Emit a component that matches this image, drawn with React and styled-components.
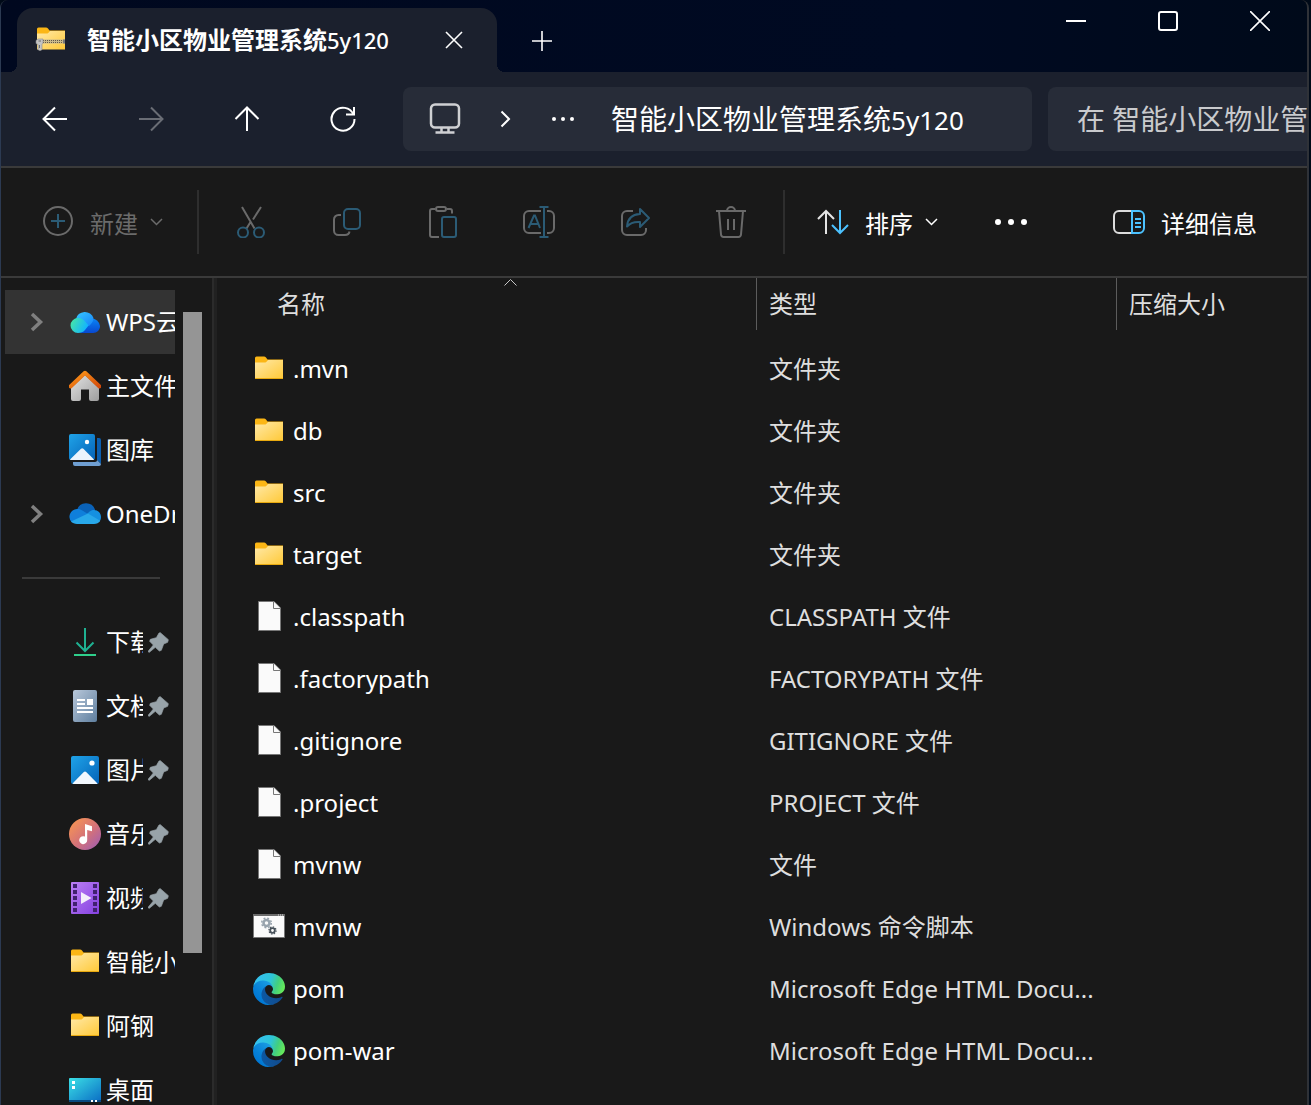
import React from "react"
import styled, { createGlobalStyle } from "styled-components"

const GlobalStyle = createGlobalStyle`
  * {
    box-sizing: border-box;
  }
  body {
    margin: 0;
    background: #000a18;
    color: #fff;
    font-family: "Noto Sans", "Noto Sans CJK SC", sans-serif;
    font-size: 24px;
    line-height: 32px;
  }
  button, input {
    font: inherit;
    color: inherit;
    border: 0;
    padding: 0;
    background: none;
  }
  svg {
    display: block;
    flex: none;
  }
`

const Window = styled.div`
  display: flex;
  flex-direction: column;
  height: 100vh;
  margin-right: 2px;
  overflow: hidden;
  background: #191919;
  border-left: 1px solid #2c3a52;
  border-right: 2px solid #2f3238;
  border-radius: 8px 8px 0 0;
`

/* title bar */

const TitleBar = styled.header`
  display: flex;
  flex: none;
  align-items: flex-end;
  height: 72px;
  padding-left: 16px;
  background: linear-gradient(90deg, #00081f, #000a22 70%, #000a1a);
`

const Tab = styled.div`
  position: relative;
  display: flex;
  align-items: center;
  width: 480px;
  height: 64px;
  padding: 0 20px 0 18px;
  background: #1b202d;
  border-radius: 16px 16px 0 0;

  &::before,
  &::after {
    content: "";
    position: absolute;
    bottom: 0;
    width: 8px;
    height: 8px;
  }
  &::before {
    right: 100%;
    background: radial-gradient(circle at 0 0, transparent 8px, #1b202d 8px);
  }
  &::after {
    left: 100%;
    background: radial-gradient(circle at 100% 0, transparent 8px, #1b202d 8px);
  }
`

const TabTitle = styled.span`
  flex: 1;
  margin-left: 20px;
  font-weight: 700;
  white-space: nowrap;
`

const TabSuffix = styled.span`
  font-size: 22px;
  font-weight: 500;
`

const SquareButton = styled.button`
  display: flex;
  align-items: center;
  justify-content: center;
  width: 46px;
  height: 46px;
`

const NewTabButton = styled(SquareButton)`
  align-self: center;
  margin: 10px 0 0 22px;
`

const WindowButtons = styled.div`
  display: flex;
  align-self: flex-start;
  margin: 0 1px 0 auto;
`

const WindowButton = styled(SquareButton)`
  width: 92px;
  height: 42px;
`

/* address row */

const AddressRow = styled.nav`
  display: flex;
  flex: none;
  align-items: center;
  height: 94px;
  padding-left: 6px;
  background: #1b202d;
`

const NavButton = styled.button`
  display: flex;
  align-items: center;
  justify-content: center;
  width: 96px;
  height: 64px;
  color: ${({ disabled }) => (disabled ? "#6a6d75" : "#fff")};
`

const AddressBox = styled.div`
  display: flex;
  flex: 1;
  align-items: center;
  min-width: 0;
  height: 64px;
  margin: 0 16px 0 12px;
  padding-left: 26px;
  background: #272c38;
  border-radius: 8px;
  overflow: hidden;
`

const Crumb = styled.button`
  display: flex;
  align-items: center;
  margin-right: ${({ $gap }) => $gap || 0}px;
  font-size: 28px;
  line-height: 40px;
  white-space: nowrap;
`

const CrumbSuffix = styled.span`
  font-size: 26px;
`

const SearchInput = styled.input`
  width: 259px;
  height: 64px;
  padding-left: 29px;
  background: #272c38;
  border-radius: 8px 0 0 8px;
  font-size: 28px;

  &::placeholder {
    color: #c9cacd;
    opacity: 1;
  }
`

/* command bar */

const CommandBar = styled.div`
  display: flex;
  flex: none;
  align-items: center;
  height: 112px;
  border-top: 2px solid #3a3a3a;
  border-bottom: 2px solid #3a3a3a;
`

const CommandButton = styled.button`
  display: flex;
  align-items: center;
  height: 64px;
  color: ${({ disabled }) => (disabled ? "#6b6b6b" : "#fff")};
`

const CommandLabel = styled.span`
  margin: 4px 12px 0 16px;
  white-space: nowrap;
`

const NewButton = styled(CommandButton)`
  margin: 0 34px 0 41px;
`

const IconButton = styled(CommandButton)`
  justify-content: center;
  width: 96px;
`

const SortButton = styled(CommandButton)`
  margin: 0 57px 0 32px;
`

const DetailsButton = styled(CommandButton)`
  margin: 0 38px 0 auto;
`

const Separator = styled.div`
  width: 2px;
  height: 64px;
  margin: ${({ $before }) => ($before ? "0 0 0 4px" : "0 4px 0 0")};
  background: #2e2e2e;
`

/* body */

const Body = styled.div`
  display: flex;
  flex: 1;
  min-height: 0;
`

const Sidebar = styled.aside`
  display: flex;
  flex: none;
  width: 216px;
  border-right: 3px solid #212121;
  overflow: hidden;
`

const Tree = styled.nav`
  width: 170px;
  margin-left: 4px;
  padding-top: 12px;
`

const TreeItem = styled.a`
  display: flex;
  align-items: center;
  height: 64px;
  overflow: hidden;
  color: #fff;
  text-decoration: none;
  background: ${({ $selected }) => ($selected ? "#333" : "transparent")};
`

const Expander = styled.span`
  display: flex;
  flex: none;
  align-items: center;
  width: 64px;
  padding-left: 25px;
`

const TreeLabel = styled.span`
  flex: 1;
  min-width: 0;
  margin-left: 5px;
  overflow: hidden;
  white-space: nowrap;
`

const PinSlot = styled.span`
  flex: none;
  padding: 0 6px 0 5px;
`

const TreeDivider = styled.hr`
  width: 138px;
  height: 2px;
  margin: 31px 0 31px 17px;
  border: 0;
  background: #3a3a3a;
`

const ScrollTrack = styled.div`
  flex: 1;
  padding: 34px 10px 0 8px;
  border-right: 2px solid #2b2b2b;
`

const ScrollThumb = styled.div`
  height: 641px;
  background: #959595;
`

const FilePane = styled.main`
  flex: 1;
  min-width: 0;
  overflow: hidden;
`

const FileTable = styled.table`
  width: 100%;
  table-layout: fixed;
  border-collapse: collapse;
`

const HeaderCell = styled.th`
  position: relative;
  width: ${({ $width }) => $width || "auto"};
  padding: 0 0 8px;
  font-weight: 400;
  text-align: left;
  vertical-align: top;
`

const HeaderButton = styled.button`
  display: flex;
  align-items: center;
  width: 100%;
  height: 52px;
  padding-left: ${({ $first }) => ($first ? 60 : 12)}px;
  border-left: ${({ $first }) => ($first ? "0" : "1px solid #5c5c5c")};
  color: #dedede;
`

const SortMark = styled.span`
  position: absolute;
  top: 1px;
  left: 287px;
`

const Cell = styled.td`
  height: 62px;
  padding: 0 0 0 13px;
  color: #dedede;
  white-space: nowrap;
`

const FileName = styled.div`
  display: flex;
  align-items: center;
  gap: 8px;
  padding-left: 23px;
  color: #fff;
`

/* icons */

const Icon = ({ size = 32, children, ...rest }) => (
  <svg width={size} height={size} viewBox={`0 0 ${size} ${size}`} fill="none" aria-hidden="true" {...rest}>
    {children}
  </svg>
)

const FolderIcon = () => (
  <Icon>
    <defs>
      <linearGradient id="folder" x1="0" y1="0" x2="1" y2="1">
        <stop offset="0" stopColor="#ffe9a8" />
        <stop offset="1" stopColor="#ffc938" />
      </linearGradient>
    </defs>
    <path d="M2 5a1.500 1.500 0 0 1 1.500-1.500H11a3 3 0 0 1 2 1l1.500 2H30V14H2Z" fill="#fbb615" />
    <path d="M2 9.500h9.500c1.200 0 1.800-.4 2.500-1.200.5-.8 1-1.300 2-1.300h14v18.500H2Z" fill="url(#folder)" />
    <path d="M2 25.500h28" stroke="#e8a90f" />
  </Icon>
)

const ZipFolderIcon = () => (
  <Icon>
    <path d="M2 5a1.500 1.500 0 0 1 1.500-1.500H11a3 3 0 0 1 2 1l1.500 2H30V14H2Z" fill="#fbb615" />
    <path d="M2 9.500h9.500c1.200 0 1.800-.4 2.500-1.200.5-.8 1-1.300 2-1.300h14v18.500H2Z" fill="url(#folder)" />
    <path d="M8 15.500h22v4H8z" fill="#c9b98a" />
    <path d="M8 16.500h21.500M8 18.500h21.500" stroke="#64594a" strokeDasharray="1 1" />
    <path d="M28 15.500h2v4h-2z" fill="#777" />
    <path d="M1 16.500l2-1.500h5v4l-1 1.500v5l-1 1H4l-1-1v-5l-2-1Z" fill="#c4c4c4" stroke="#8a8a8a" strokeWidth=".6" />
    <path d="M3.500 17h2.500M4.500 21v3" stroke="#6d6d6d" />
  </Icon>
)

const PageIcon = () => (
  <Icon>
    <path d="M5.500.5h15.500l6.500 6.500v22.500h-22Z" fill="#fafafa" stroke="#777" />
    <path d="M20.500.5v7h7" fill="#fafafa" stroke="#777" />
  </Icon>
)

const ScriptIcon = () => (
  <Icon>
    <path d="M.5 3.500h31v23H.5z" fill="#fafafa" stroke="#777" />
    <path d="M0 4h32" stroke="#6b6b6b" strokeWidth="2" />
    <path d="M25 4h5" stroke="#ddd" strokeDasharray="1 1" />
    <circle cx="13.500" cy="12" r="3" stroke="#98a3ad" strokeWidth="2.500" />
    <circle cx="13.500" cy="12" r="4.800" stroke="#98a3ad" strokeWidth="1.500" strokeDasharray="1.900 1.900" />
    <circle cx="19.500" cy="19.500" r="2.300" stroke="#48525b" strokeWidth="1.800" />
    <circle cx="19.500" cy="19.500" r="3.600" stroke="#48525b" strokeWidth="1.200" strokeDasharray="1.400 1.400" />
  </Icon>
)

const EdgeIcon = () => (
  <svg width="32" height="32" viewBox="0 0 256 256" aria-hidden="true">
    <defs>
      <linearGradient id="edgeDark" x1="63" y1="177" x2="242" y2="177" gradientUnits="userSpaceOnUse">
        <stop offset="0" stopColor="#0c59a4" />
        <stop offset="1" stopColor="#114a8b" />
      </linearGradient>
      <linearGradient id="edgeBlue" x1="157" y1="100" x2="46" y2="221" gradientUnits="userSpaceOnUse">
        <stop offset="0" stopColor="#1b9de2" />
        <stop offset=".16" stopColor="#1595df" />
        <stop offset=".67" stopColor="#0680d7" />
        <stop offset="1" stopColor="#0078d4" />
      </linearGradient>
      <linearGradient id="edgeGreen" x1="20" y1="60" x2="245" y2="140" gradientUnits="userSpaceOnUse">
        <stop offset="0" stopColor="#35c1f1" />
        <stop offset=".5" stopColor="#2ec5d8" />
        <stop offset=".75" stopColor="#42cf7f" />
        <stop offset="1" stopColor="#66e85a" />
      </linearGradient>
    </defs>
    <g transform="translate(-4.630 -4.920)">
      <path
        fill="url(#edgeDark)"
        d="M235.680 195.460a93.730 93.730 0 0 1-10.540 4.710 101.870 101.870 0 0 1-35.900 6.460c-47.320 0-88.540-32.550-88.540-74.320A31.480 31.480 0 0 1 117.130 105c-42.800 1.800-53.800 46.400-53.800 72.530 0 73.880 68.090 81.370 82.760 81.370 7.910 0 19.840-2.300 27-4.560l1.310-.44a128.340 128.340 0 0 0 66.600-52.800 4 4 0 0 0-5.320-5.640z"
      />
      <path
        fill="url(#edgeBlue)"
        d="M110.340 246.340A79.200 79.200 0 0 1 87.600 225a80.720 80.720 0 0 1 29.530-120c3.120-1.470 8.450-4.130 15.540-4a32.350 32.350 0 0 1 25.690 13 31.880 31.880 0 0 1 6.360 18.660c0-.21 24.460-79.600-80-79.600-43.900 0-80 41.660-80 78.210a130.150 130.150 0 0 0 12.110 56 128 128 0 0 0 156.380 67.110 75.550 75.550 0 0 1-62.780-8z"
      />
      <path
        fill="url(#edgeGreen)"
        d="M156.940 153.780c-.81 1.050-3.300 2.500-3.300 5.660 0 2.610 1.700 5.120 4.720 7.230 14.380 10 41.490 8.680 41.560 8.680a59.560 59.560 0 0 0 30.270-8.350 61.380 61.380 0 0 0 30.430-52.880c.26-22.410-8-37.310-11.340-43.910-21.190-41.450-66.930-65.290-116.670-65.290a128 128 0 0 0-128 126.200c.48-36.540 36.800-66.050 80-66.050 3.500 0 23.460.34 42 10.070 16.340 8.580 24.900 18.940 30.850 29.210 6.180 10.670 7.280 24.150 7.280 29.520s-2.740 13.330-7.800 19.910z"
      />
    </g>
  </svg>
)

const CloudDriveIcon = () => (
  <Icon>
    <defs>
      <linearGradient id="wpsLeft" x1="0" y1="0" x2="1" y2="0.400">
        <stop offset="0" stopColor="#4aeb9e" />
        <stop offset="1" stopColor="#12b4ff" />
      </linearGradient>
      <linearGradient id="wpsTop" x1="0" y1="0" x2="1" y2="1">
        <stop offset="0" stopColor="#38c8ff" />
        <stop offset="1" stopColor="#1583fa" />
      </linearGradient>
      <linearGradient id="wpsRight" x1="0" y1="0" x2="0" y2="1">
        <stop offset="0" stopColor="#0a84f5" />
        <stop offset="1" stopColor="#0848d0" />
      </linearGradient>
    </defs>
    <path d="M11 27l11-14.500a8.500 8.500 0 0 1 9 7.500c0 4-3 7-7 7Z" fill="url(#wpsRight)" />
    <path d="M7 13a9 8.500 0 0 1 17.500-1c.2 3-1.500 5-4.500 8Z" fill="url(#wpsTop)" />
    <path d="M9 12c4.500 0 6 2 10.500 7.500L16 24c-2 2.200-4 3-7 3A7.500 7.500 0 0 1 9 12Z" fill="url(#wpsLeft)" />
  </Icon>
)

const HomeIcon = () => (
  <Icon>
    <defs>
      <linearGradient id="homeWall" x1="0" y1="0" x2="1" y2="1">
        <stop offset="0" stopColor="#e3e3e3" />
        <stop offset="1" stopColor="#9d9d9d" />
      </linearGradient>
      <linearGradient id="homeRoof" x1="0" y1="0" x2="1" y2="1">
        <stop offset="0" stopColor="#ff9c1a" />
        <stop offset="1" stopColor="#d34a0b" />
      </linearGradient>
    </defs>
    <path d="M16 5L30 18v11a2 2 0 0 1-2 2h-6a2 2 0 0 1-2-2v-9.500h-8V29a2 2 0 0 1-2 2H4a2 2 0 0 1-2-2V18Z" fill="url(#homeWall)" />
    <path d="M1.500 16.500L16 2.800l14.500 13.700" stroke="url(#homeRoof)" strokeWidth="4" strokeLinejoin="round" strokeLinecap="round" />
  </Icon>
)

const PictureDefs = () => (
  <defs>
    <linearGradient id="photo" x1="0" y1="0" x2="1" y2="1">
      <stop offset="0" stopColor="#1fa3e8" />
      <stop offset="1" stopColor="#0563b8" />
    </linearGradient>
  </defs>
)

const GalleryIcon = () => (
  <Icon>
    <PictureDefs />
    <path d="M28 4h2a2 2 0 0 1 2 2v24l-4-4Z" fill="#0b5fb0" />
    <path d="M4 28h22c1.500 0 2-1 2-2l4 4a2 2 0 0 1-2 2H6a2 2 0 0 1-2-2Z" fill="#6f9fd2" />
    <rect width="26" height="26" rx="2" fill="url(#photo)" />
    <path d="M1 25.500L12 14.800a1.700 1.700 0 0 1 2.400 0L25 25.500q-.5.500-1 .5H2q-.5 0-1-.5Z" fill="#eaf4fd" />
    <circle cx="18" cy="8" r="2.200" fill="#fff" />
  </Icon>
)

const PicturesIcon = () => (
  <Icon>
    <PictureDefs />
    <rect x="2" y="2" width="28" height="28" rx="2" fill="url(#photo)" />
    <path d="M3.500 29.500L14.800 18a1.700 1.700 0 0 1 2.400 0l11.300 11.500q-.5.500-1 .5h-23Z" fill="#f2f8fe" />
    <circle cx="23" cy="9" r="2.600" fill="#fff" />
  </Icon>
)

const OneDriveIcon = () => (
  <Icon>
    <path d="M8 12a9.500 9.500 0 0 1 18-.5L24 18l-12 1Z" fill="#0a62b8" />
    <path d="M8 11c4 0 6 2 12 5.500L3 24.500A7.800 7.800 0 0 1 8 11Z" fill="#0f7fdb" />
    <path d="M25 12c4 0 7 3 7 7 0 2-.6 3.500-1.800 5L17 17c3-2.500 4-5 8-5Z" fill="#1590e0" />
    <path d="M2 23.500L19 15.500l12.200 7.200c-1.500 2.300-3.400 3.300-6.200 3.300H8c-2.500 0-4.500-1-6-2.500Z" fill="#28a8ea" />
  </Icon>
)

const DownloadIcon = () => (
  <Icon strokeWidth="2">
    <path d="M16 2v23M7.500 16.500l8.500 8.500 8.500-8.500" stroke="#1fb192" />
    <path d="M5 29h22" stroke="#2fcf8c" />
  </Icon>
)

const DocumentIcon = () => (
  <Icon>
    <defs>
      <linearGradient id="doc" x1="0" y1="0" x2="1" y2="1">
        <stop offset="0" stopColor="#b9c8da" />
        <stop offset="1" stopColor="#5f7f9f" />
      </linearGradient>
    </defs>
    <rect x="4" width="24" height="32" rx="2" fill="url(#doc)" />
    <path d="M8 10h8M8 14h8M8 18h16M8 22h16" stroke="#fff" strokeWidth="2" />
    <path d="M18 9h6v6h-6z" fill="#fff" />
  </Icon>
)

const MusicIcon = () => (
  <Icon>
    <defs>
      <linearGradient id="music" x1="0" y1="0" x2="1" y2="1">
        <stop offset=".1" stopColor="#f59355" />
        <stop offset=".55" stopColor="#d3717a" />
        <stop offset="1" stopColor="#9a5bb8" />
      </linearGradient>
    </defs>
    <circle cx="16" cy="16" r="16" fill="url(#music)" />
    <path d="M16 6l7 2.200v5L18.200 12v10a4 4 0 1 1-2.200-3.400Z" fill="#fff" />
  </Icon>
)

const VideoIcon = () => (
  <Icon>
    <defs>
      <linearGradient id="video" x1="0" y1="0" x2="1" y2="1">
        <stop offset="0" stopColor="#bb7ff5" />
        <stop offset="1" stopColor="#8541e0" />
      </linearGradient>
    </defs>
    <rect x="2" width="28" height="32" rx="1" fill="url(#video)" />
    <path d="M6 2v28M26 2v28" stroke="#40216f" strokeWidth="4" strokeDasharray="4 2" />
    <path d="M12 10l10.500 6L12 22Z" fill="#f4eefb" />
  </Icon>
)

const DesktopIcon = () => (
  <Icon>
    <defs>
      <linearGradient id="desk" x1="0" y1="0" x2="1" y2="1">
        <stop offset="0" stopColor="#3be0e6" />
        <stop offset="1" stopColor="#0a6cc4" />
      </linearGradient>
    </defs>
    <rect y="4" width="32" height="24" rx="1" fill="url(#desk)" />
    <path d="M0 26h32v2H0z" fill="#0a4a80" />
    <path d="M3 7h3v3H3zM3 12h3v3H3zM22 26h2v2h-2zM26 26h2v2h-2z" fill="#fff" />
  </Icon>
)

const PinIcon = () => (
  <svg width="21" height="21" viewBox="0 0 63 63" aria-hidden="true">
    <path
      d="M37 2L61 23L59 31L47 36L40 55L34 57L22 46L4 61L1 60L1 57L16 39L5 28L7 22L25 17L33 3Z"
      fill="#98a3a9"
      stroke="#98a3a9"
      strokeWidth="2"
      strokeLinejoin="round"
    />
  </svg>
)

const ExpandIcon = () => (
  <svg width="14" height="20" viewBox="0 0 14 20" fill="none" aria-hidden="true">
    <path d="M2 2l8.500 8L2 18" stroke="#808080" strokeWidth="3.500" />
  </svg>
)

const CaretIcon = () => (
  <svg width="13" height="8" viewBox="0 0 13 8" fill="none" stroke="currentColor" strokeWidth="1.500" aria-hidden="true">
    <path d="M1 1l5.500 5.500L12 1" />
  </svg>
)

const gray = "#6a6a6a"
const teal = "#2b5b75"

const CutIcon = () => (
  <Icon strokeWidth="2">
    <path d="M7 1l12.500 21.500M26 1l-8 12.500M15.500 16l-4 6.500" stroke={gray} />
    <circle cx="8" cy="26.500" r="5" stroke={teal} />
    <circle cx="24" cy="26.500" r="5" stroke={teal} />
  </Icon>
)

const CopyIcon = () => (
  <Icon strokeWidth="2">
    <path d="M10 9H7.500A4.500 4.500 0 0 0 3 13.500v11A4.500 4.500 0 0 0 7.500 29h6.500c2.500 0 4-1 4.500-3.500" stroke={gray} />
    <rect x="13" y="3" width="16" height="20" rx="4" stroke={teal} />
  </Icon>
)

const PasteIcon = () => (
  <Icon strokeWidth="2">
    <path d="M8 3H5A2 2 0 0 0 3 5v24a2 2 0 0 0 2 2h7M20 3h3a2 2 0 0 1 2 2v2.500" stroke={gray} />
    <rect x="9" y="1" width="10" height="4" rx="2" stroke={gray} />
    <rect x="15" y="11" width="14" height="20" rx="2" stroke={teal} />
  </Icon>
)

const RenameIcon = () => (
  <Icon strokeWidth="2">
    <path d="M18 5H6a5 5 0 0 0-5 5v12a5 5 0 0 0 5 5h12M24 5h2a5 5 0 0 1 5 5v12a5 5 0 0 1-5 5h-2" stroke={gray} />
    <path d="M5.500 22L11 9.500h1L17 22M7.500 18h8M16.500 1h9M16.500 31h9M21 1v30" stroke={teal} />
  </Icon>
)

const ShareIcon = () => (
  <Icon strokeWidth="2">
    <path d="M14 5H8a5 5 0 0 0-5 5v14a5 5 0 0 0 5 5h14a5 5 0 0 0 5-5v-2" stroke={gray} />
    <path d="M21 3l9 9-9 9v-5c-6-.5-9.500.5-13 4.500.5-7 4-12 13-12.500Z" stroke={teal} strokeLinejoin="round" />
  </Icon>
)

const DeleteIcon = () => (
  <Icon strokeWidth="2">
    <path d="M1 5h30M12 5a4 4 0 0 1 8 0M4 5l2 23.500A2.500 2.500 0 0 0 8.500 31h15a2.500 2.500 0 0 0 2.500-2.500L28 5M13 13v11M19 13v11" stroke={gray} />
  </Icon>
)

const NewIcon = () => (
  <Icon strokeWidth="2">
    <circle cx="16" cy="15" r="14" stroke={gray} />
    <path d="M16 8v14M9 15h14" stroke={teal} />
  </Icon>
)

const SortIcon = () => (
  <Icon strokeWidth="2">
    <path d="M9 28V5M1 13l8-8 8 8" stroke="#e4e4e4" />
    <path d="M23 4v23M15 19l8 8 8-8" stroke="#4cc2ff" />
  </Icon>
)

const DetailsIcon = () => (
  <Icon strokeWidth="2">
    <path d="M19 5H6a5 5 0 0 0-5 5v12a5 5 0 0 0 5 5h13" stroke="#dcdcdc" />
    <path d="M19 5h7a5 5 0 0 1 5 5v12a5 5 0 0 1-5 5h-7ZM22 13h6M22 17h6M22 21h6" stroke="#4cc2ff" />
  </Icon>
)

const MoreIcon = ({ width = 32, r = 3 }) => (
  <svg width={width} height="8" viewBox={`0 0 ${width} 8`} fill="#fff" aria-hidden="true">
    <circle cx={r} cy="4" r={r} />
    <circle cx={width / 2} cy="4" r={r} />
    <circle cx={width - r} cy="4" r={r} />
  </svg>
)

const MonitorIcon = () => (
  <Icon stroke="#cfd0d3" strokeWidth="2.500">
    <rect x="2" y="1.500" width="28" height="23" rx="4" />
    <path d="M12.500 25v4M19.500 25v4M6.500 29.500h19" />
  </Icon>
)

const places = [
  { label: "WPS云盘", icon: <CloudDriveIcon />, expandable: true, selected: true },
  { label: "主文件夹", icon: <HomeIcon /> },
  { label: "图库", icon: <GalleryIcon /> },
  { label: "OneDrive", icon: <OneDriveIcon />, expandable: true },
]

const pinned = [
  { label: "下载", icon: <DownloadIcon />, pin: true },
  { label: "文档", icon: <DocumentIcon />, pin: true },
  { label: "图片", icon: <PicturesIcon />, pin: true },
  { label: "音乐", icon: <MusicIcon />, pin: true },
  { label: "视频", icon: <VideoIcon />, pin: true },
  { label: "智能小区", icon: <FolderIcon /> },
  { label: "阿钢", icon: <FolderIcon /> },
  { label: "桌面", icon: <DesktopIcon /> },
]

const files = [
  { name: ".mvn", type: "文件夹", icon: <FolderIcon /> },
  { name: "db", type: "文件夹", icon: <FolderIcon /> },
  { name: "src", type: "文件夹", icon: <FolderIcon /> },
  { name: "target", type: "文件夹", icon: <FolderIcon /> },
  { name: ".classpath", type: "CLASSPATH 文件", icon: <PageIcon /> },
  { name: ".factorypath", type: "FACTORYPATH 文件", icon: <PageIcon /> },
  { name: ".gitignore", type: "GITIGNORE 文件", icon: <PageIcon /> },
  { name: ".project", type: "PROJECT 文件", icon: <PageIcon /> },
  { name: "mvnw", type: "文件", icon: <PageIcon /> },
  { name: "mvnw", type: "Windows 命令脚本", icon: <ScriptIcon /> },
  { name: "pom", type: "Microsoft Edge HTML Docu...", icon: <EdgeIcon /> },
  { name: "pom-war", type: "Microsoft Edge HTML Docu...", icon: <EdgeIcon /> },
]

const Place = ({ label, icon, expandable, selected, pin }) => (
  <TreeItem href="#" $selected={selected}>
    <Expander>{expandable && <ExpandIcon />}</Expander>
    {icon}
    <TreeLabel>{label}</TreeLabel>
    {pin && (
      <PinSlot>
        <PinIcon />
      </PinSlot>
    )}
  </TreeItem>
)

export default () => {
  return (
    <>
      <GlobalStyle />
      <Window>
        <TitleBar>
          <Tab>
            <ZipFolderIcon />
            <TabTitle>
              智能小区物业管理系统<TabSuffix>5y120</TabSuffix>
            </TabTitle>
            <SquareButton aria-label="关闭标签页">
              <Icon size={18} stroke="#fff" strokeWidth="1.600">
                <path d="M1 1l16 16M17 1L1 17" />
              </Icon>
            </SquareButton>
          </Tab>
          <NewTabButton aria-label="新标签页">
            <Icon size={20} stroke="#fff" strokeWidth="1.600">
              <path d="M10 0v20M0 10h20" />
            </Icon>
          </NewTabButton>
          <WindowButtons>
            <WindowButton aria-label="最小化">
              <Icon size={20} stroke="#fff" strokeWidth="2">
                <path d="M0 10h20" />
              </Icon>
            </WindowButton>
            <WindowButton aria-label="最大化">
              <Icon size={20} stroke="#fff" strokeWidth="2">
                <rect x="1" y="1" width="18" height="18" rx="2" />
              </Icon>
            </WindowButton>
            <WindowButton aria-label="关闭">
              <Icon size={20} stroke="#fff" strokeWidth="1.600">
                <path d="M0 0l20 20M20 0L0 20" />
              </Icon>
            </WindowButton>
          </WindowButtons>
        </TitleBar>

        <AddressRow>
          <NavButton aria-label="后退">
            <Icon size={26} stroke="currentColor" strokeWidth="2">
              <path d="M25 13H2M13 1.500L1.500 13 13 24.500" />
            </Icon>
          </NavButton>
          <NavButton aria-label="前进" disabled>
            <Icon size={26} stroke="currentColor" strokeWidth="2">
              <path d="M1 13h23M13 1.500L24.500 13 13 24.500" />
            </Icon>
          </NavButton>
          <NavButton aria-label="向上">
            <Icon size={26} stroke="currentColor" strokeWidth="2">
              <path d="M13 25V2M1.500 13L13 1.500 24.500 13" />
            </Icon>
          </NavButton>
          <NavButton aria-label="刷新">
            <Icon size={26} stroke="currentColor" strokeWidth="2">
              <path d="M23.500 8.500A11.500 11.500 0 1 0 24.500 13M24 1v7.500h-8" />
            </Icon>
          </NavButton>
          <AddressBox>
            <Crumb $gap={39} aria-label="此电脑">
              <MonitorIcon />
            </Crumb>
            <Crumb $gap={41} aria-label="展开">
              <svg width="11" height="18" viewBox="0 0 11 18" fill="none" stroke="#fff" strokeWidth="2" aria-hidden="true">
                <path d="M1.500 1.500L9 9l-7.500 7.500" />
              </svg>
            </Crumb>
            <Crumb $gap={37} aria-label="更多位置">
              <MoreIcon width={22} r={2} />
            </Crumb>
            <Crumb>
              <span>
                智能小区物业管理系统<CrumbSuffix>5y120</CrumbSuffix>
              </span>
            </Crumb>
          </AddressBox>
          <SearchInput aria-label="搜索" placeholder="在 智能小区物业管理系统5y120 中搜索" />
        </AddressRow>

        <CommandBar>
          <NewButton disabled>
            <NewIcon />
            <CommandLabel>新建</CommandLabel>
            <CaretIcon />
          </NewButton>
          <Separator />
          <IconButton disabled aria-label="剪切">
            <CutIcon />
          </IconButton>
          <IconButton disabled aria-label="复制">
            <CopyIcon />
          </IconButton>
          <IconButton disabled aria-label="粘贴">
            <PasteIcon />
          </IconButton>
          <IconButton disabled aria-label="重命名">
            <RenameIcon />
          </IconButton>
          <IconButton disabled aria-label="共享">
            <ShareIcon />
          </IconButton>
          <IconButton disabled aria-label="删除">
            <DeleteIcon />
          </IconButton>
          <Separator $before />
          <SortButton>
            <SortIcon />
            <CommandLabel>排序</CommandLabel>
            <CaretIcon />
          </SortButton>
          <CommandButton aria-label="查看更多">
            <MoreIcon />
          </CommandButton>
          <DetailsButton>
            <DetailsIcon />
            <CommandLabel>详细信息</CommandLabel>
          </DetailsButton>
        </CommandBar>

        <Body>
          <Sidebar>
            <Tree>
              {places.map(place => (
                <Place key={place.label} {...place} />
              ))}
              <TreeDivider />
              {pinned.map(place => (
                <Place key={place.label} {...place} />
              ))}
            </Tree>
            <ScrollTrack>
              <ScrollThumb />
            </ScrollTrack>
          </Sidebar>

          <FilePane>
            <FileTable>
              <thead>
                <tr>
                  <HeaderCell $width="539px">
                    <HeaderButton $first>名称</HeaderButton>
                    <SortMark>
                      <svg width="13" height="7" viewBox="0 0 13 7" fill="none" stroke="#c8c8c8" aria-hidden="true">
                        <path d="M.5 6.500l6-6 6 6" />
                      </svg>
                    </SortMark>
                  </HeaderCell>
                  <HeaderCell $width="360px">
                    <HeaderButton>类型</HeaderButton>
                  </HeaderCell>
                  <HeaderCell>
                    <HeaderButton>压缩大小</HeaderButton>
                  </HeaderCell>
                </tr>
              </thead>
              <tbody>
                {files.map(({ name, type, icon }) => (
                  <tr key={name + type}>
                    <Cell>
                      <FileName>
                        {icon}
                        <span>{name}</span>
                      </FileName>
                    </Cell>
                    <Cell>{type}</Cell>
                    <Cell />
                  </tr>
                ))}
              </tbody>
            </FileTable>
          </FilePane>
        </Body>
      </Window>
    </>
  )
}
